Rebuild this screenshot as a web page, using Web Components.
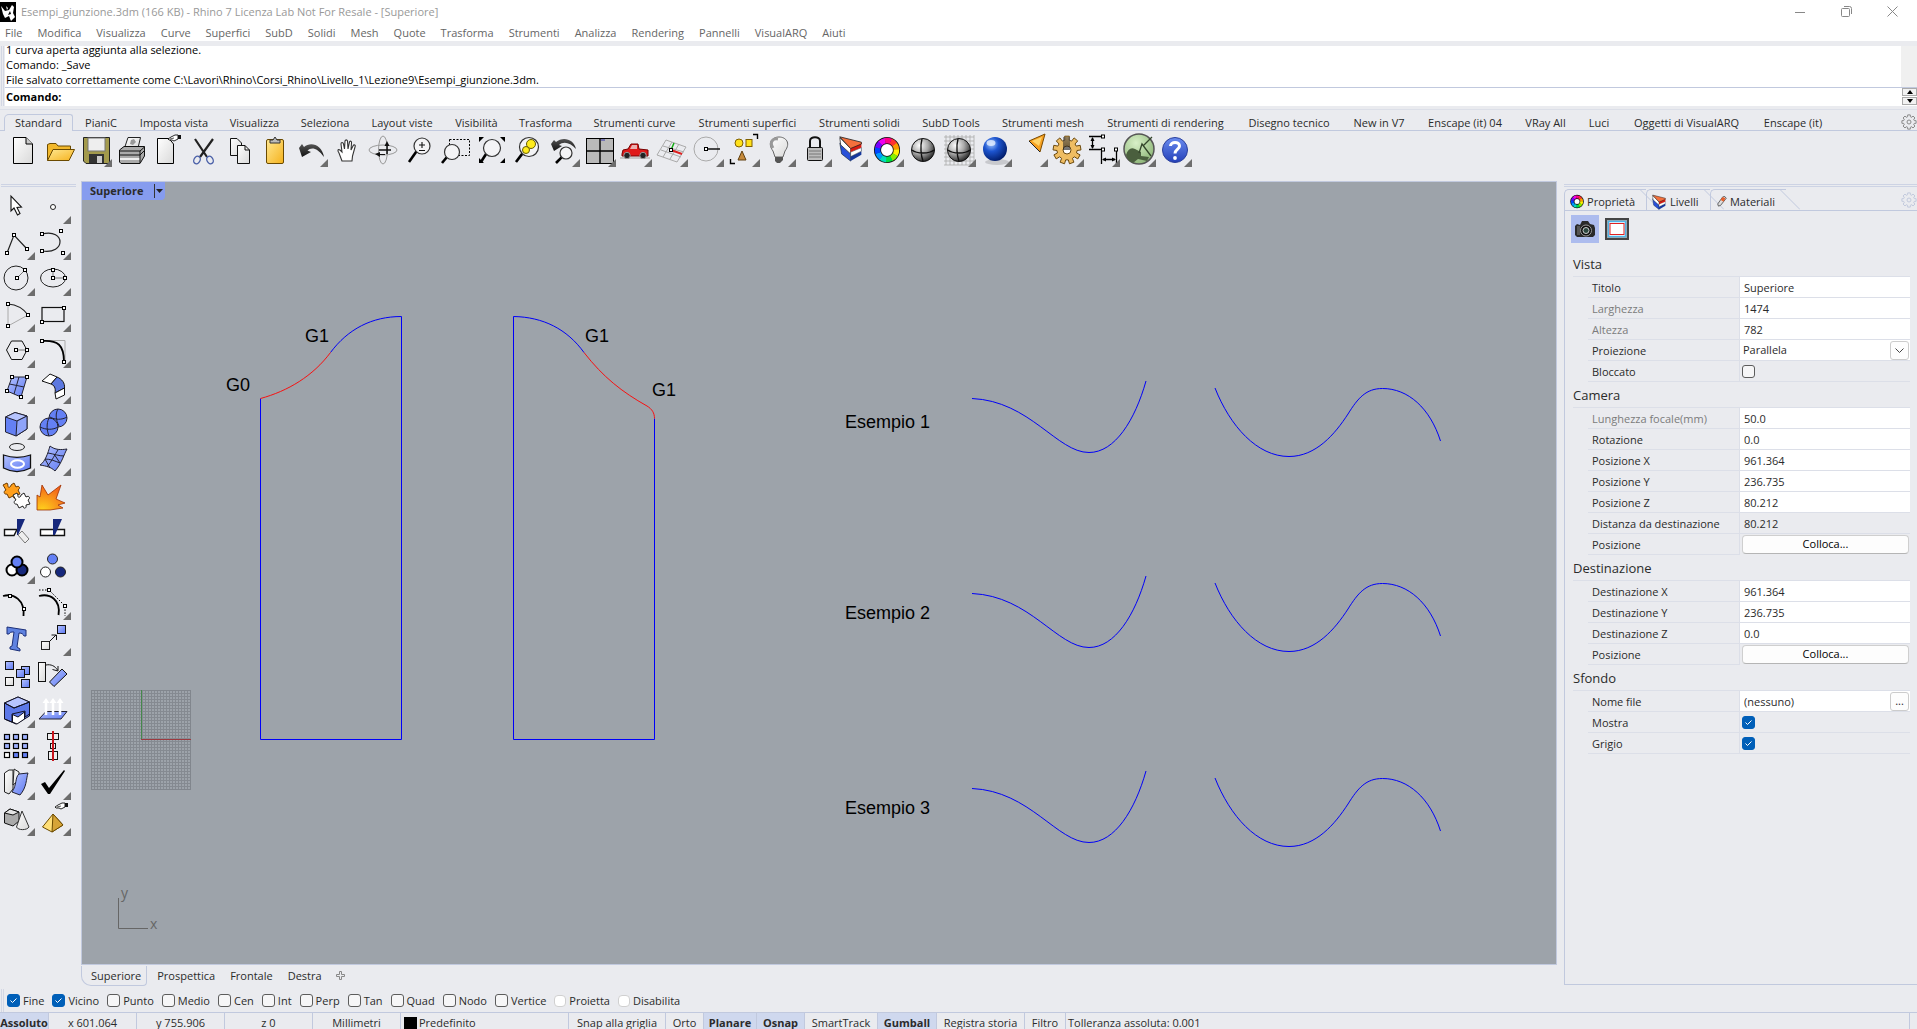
<!DOCTYPE html>
<html lang="it">
<head>
<meta charset="utf-8">
<title>Esempi_giunzione.3dm - Rhino 7</title>
<style>
  html, body { margin: 0; height: 100%; }
  body {
    --line: #c1c9de; --bg: #eaebef; --on: #cfd8ee; --ink: #2b2b2b; --rule: #dcdfe8;
    background: var(--bg); color: var(--ink);
    font: 11px/16px "Open Sans", "Noto Sans", sans-serif; overflow: hidden;
  }
</style>
</head>
<body>
<rhino-app></rhino-app>

<script>
/* ---------- shared drawing parts ---------- */
const DEFS = `<defs>
<linearGradient id="w" x1="0" y1="0" x2="1" y2="1"><stop stop-color="#fff"/><stop offset="1" stop-color="#d9d9d9"/></linearGradient>
<linearGradient id="y" x1="0" y1="0" x2="1" y2="1"><stop stop-color="#ffe892"/><stop offset="1" stop-color="#f5b21d"/></linearGradient>
<linearGradient id="b" x1="0" y1="0" x2="1" y2="1"><stop stop-color="#b5c3ff"/><stop offset="1" stop-color="#5c78f2"/></linearGradient>
<linearGradient id="k" x1="0" y1="0" x2="0" y2="1"><stop stop-color="#555"/><stop offset="1" stop-color="#111"/></linearGradient>
<linearGradient id="q" x1="0" y1="0" x2="0" y2="1"><stop stop-color="#6a8cf0"/><stop offset="1" stop-color="#2440b8"/></linearGradient>
<radialGradient id="g" cx=".35" cy=".3" r=".75"><stop stop-color="#fff"/><stop offset=".5" stop-color="#a8a8a8"/><stop offset="1" stop-color="#222"/></radialGradient>
<radialGradient id="s" cx=".35" cy=".3" r=".75"><stop stop-color="#9cc4ff"/><stop offset=".4" stop-color="#1d55d0"/><stop offset="1" stop-color="#001a66"/></radialGradient>
<radialGradient id="v" cx=".4" cy=".3" r=".8"><stop stop-color="#d8f0c8"/><stop offset="1" stop-color="#86b070"/></radialGradient>
<radialGradient id="o" cx=".2" cy="1" r="1"><stop stop-color="#ffd21c"/><stop offset="1" stop-color="#f4641a"/></radialGradient>
</defs>`;
const dot = (x, y) => `<rect x="${x - 1.5}" y="${y - 1.5}" width="3" height="3" fill="#fff" stroke="#000"/>`;
const dots = (...p) => p.map(([x, y]) => dot(x, y)).join('');
const lens = (x, y, r, hx, hy) => `<path d="M${x - r * .7} ${y + r * .7}L${hx} ${hy}" stroke="#000" stroke-width="2.6"/><circle cx="${x}" cy="${y}" r="${r}" fill="#f4f4f6" stroke="#333" stroke-width="1.2"/>`;
const hand = (x, y) => `<g transform="translate(${x} ${y})"><path d="M0 4L3 2L7 0H10V4L6 6L4 5L1 5Z" fill="#fff" stroke="#111" stroke-width=".9"/><path d="M2 4L6 3" stroke="#111" stroke-width=".7"/><path d="M10 0H13V4H10Z" fill="#111"/></g>`;
const wheel = (x, y, r, w) => {
  const c = ['#f33', '#f90', '#fe0', '#8e0', '#0d4', '#0db', '#09f', '#04f', '#70f', '#e0e', '#f08'];
  const n = c.length;
  const at = (i) => { const a = i / n * 2 * Math.PI - 1.2; return (x + r * Math.cos(a)) + ' ' + (y + r * Math.sin(a)); };
  return `<circle cx="${x}" cy="${y}" r="${r}" fill="#fff" stroke="#111" stroke-width="${w + 1.6}"/>` +
    c.map((k, i) => `<path d="M${at(i)}A${r} ${r} 0 0 1 ${at(i + 1.05)}" fill="none" stroke="${k}" stroke-width="${w}"/>`).join('');
};
const layers = `<path d="M2 9L14 20V29L4 21Z" fill="#2850d8" stroke="#123" stroke-width=".7"/><path d="M14 24L26 18V22L14 29Z" fill="#16389c"/><path d="M2 3L14 15V21L3 11Z" fill="#fff" stroke="#222" stroke-width=".8"/><path d="M14 19L26 14V18L14 24Z" fill="#fff" stroke="#234" stroke-width=".6"/><path d="M14 14L26 9V14L14 19Z" fill="#d81a10"/><path d="M2 2L26 8V10L14 15Z" fill="#f4703c" stroke="#222" stroke-width=".9"/>`;
const gearPath = (x, y, r1, r2, n) => {
  let d = '';
  for (let i = 0; i < n; i++) {
    [[-.32, r1], [-.24, r2], [.24, r2], [.32, r1]].forEach(([o, r], j) => {
      const a = (i + o) / n * 2 * Math.PI - Math.PI / 2;
      d += (i || j ? 'L' : 'M') + (x + r * Math.cos(a)).toFixed(1) + ' ' + (y + r * Math.sin(a)).toFixed(1);
    });
  }
  return d + 'Z';
};
const puzzle = 'M0 3L4 1L5 3C4 6 8 6 8 3L11 1L13 5C16 3 18 6 15 8L17 12L13 13C14 17 10 17 10 14L6 16L4 12C1 13 0 9 3 8Z';
const ball = `<circle cx="18" cy="18" r="11.5" fill="url(#g)" stroke="#111"/><path d="M17 7C15 14 16 24 18 29M7 18C12 22 24 22 29 18" fill="none" stroke="#111" stroke-width="1.4"/>`;

const ICONS = {
  /* top strip */
  nuovo: `<path d="M8.500 5.500H21L27.500 12V31.500H8.500Z" fill="url(#w)" stroke="#000"/><path d="M21 5.500V12H27.500" fill="#ccc" stroke="#000"/>`,
  apri: `<path d="M6.500 28.500V12.500L9 11.500H15L17 14H29.500V18" fill="#f2b82c" stroke="#6b4a00"/><path d="M6.500 28.500L12 17.500H33.500L28 28.500Z" fill="url(#y)" stroke="#6b4a00"/>`,
  salva: `<path d="M6.500 5.500H32.500V31.500H9L6.500 29Z" fill="#a39a4c" stroke="#222"/><rect x="11" y="6" width="17" height="13" fill="#eee" stroke="#777"/><rect x="12" y="22" width="15" height="9" fill="#333"/><rect x="20" y="24" width="5" height="7" fill="#ccc"/>`,
  stampa: `<path d="M11.500 16L15 5.500H27.500L25 16" fill="url(#w)" stroke="#222"/><path d="M18 8L21 7L23 10L20 13L17 12Z" fill="#999"/><path d="M6.500 18L11 14.500H31.500V24L27 31.500H8L6.500 30Z" fill="#aaa" stroke="#111"/><path d="M6.500 19H27L31.500 15M6.500 23H27L32 18" fill="none" stroke="#111"/><path d="M7 27H27" stroke="#eee" stroke-width="2"/><path d="M27 19V31" stroke="#111"/>`,
  proprieta: `<path d="M8.500 6.500H20L24.500 12V31.500H8.500Z" fill="url(#w)" stroke="#000"/>${hand(19, 3)}`,
  taglia: `<path d="M10 7L22 25M28 7L15 25" stroke="#222" stroke-width="2.200"/><ellipse cx="12" cy="28" rx="3" ry="4" transform="rotate(30 12 28)" fill="none" stroke="#4a60a8" stroke-width="1.400"/><ellipse cx="25" cy="28" rx="3" ry="4" transform="rotate(-30 25 28)" fill="none" stroke="#4a60a8" stroke-width="1.400"/>`,
  copia: `<path d="M9.500 6.500H16L20.500 11V23.500H9.500Z" fill="url(#w)" stroke="#111"/><path d="M16.500 13.500H24L28.500 18V31.500H16.500Z" fill="url(#w)" stroke="#111"/><path d="M24 13.500V18H28.500" fill="none" stroke="#111"/>`,
  incolla: `<rect x="9.500" y="7.500" width="17" height="24" rx="1.500" fill="url(#y)" stroke="#6b4a00"/><path d="M13 11V8H16L18 5L20 8H23V11Z" fill="#bbb" stroke="#333"/>`,
  annulla: `<path d="M6 16L9 25L18 20L14.500 18.500C18 15 24 15 31 25C29 13 18 9 11 15L9 12Z" fill="url(#k)"/>`,
  pan: `<path d="M13 29L10 21C8 18 9 17 11 18L13 20L12 12C12 10 14 10 14.500 12L15.500 17L16 9C16.500 7.500 18 7.500 18.500 9L19 17L20.500 10C21 8.500 23 9 22.500 11L22 18L24 14C25 12 27 13 26 15L23.500 24L23 29Z" fill="#fff" stroke="#333" stroke-width="1.100"/>`,
  ruota: `<ellipse cx="18" cy="18" rx="14" ry="5" fill="none" stroke="#999"/><ellipse cx="18" cy="18" rx="4.500" ry="14" fill="none" stroke="#999"/><path d="M22 22V13M26 18H14" stroke="#111" stroke-width="1.500"/><path d="M19.500 14L22 9L24.500 14ZM15 20L10 22L15 25Z" fill="#111"/><path d="M14 22.500H20" stroke="#111"/>`,
  zoom: `${lens(21, 14, 8, 8, 30)}<path d="M18 13H24M21 10V16M18 18.500H24" stroke="#111" stroke-width="1.100"/>`,
  zoomfin: `<rect x="12.500" y="7.500" width="20" height="16" fill="none" stroke="#000" stroke-dasharray="2 1.500"/>${lens(15, 20, 7.500, 5, 31)}`,
  zoomest: `${lens(19, 16, 8.500, 8, 30)}<path d="M6 5H11L6 10ZM32 5H27L32 10ZM6 31H11L6 26ZM32 31H27L32 26Z" fill="#000"/>`,
  zoomsel: `${lens(20, 15, 9.500, 7, 30)}<circle cx="22" cy="12" r="4.500" fill="#ffec1c" stroke="#665c00"/><circle cx="17" cy="18" r="3.500" fill="#ffec1c" stroke="#665c00"/>`,
  annvista: `<path d="M6 12L9 19L17 14L14 13C18 9 25 10 31 17C29 7 18 4 11 10L9 8Z" fill="url(#k)"/>${lens(21, 21, 6, 11, 31)}`,
  vista4: `<rect x="5.500" y="6.500" width="27" height="25" fill="#b9b9b9" stroke="#000"/><path d="M19 6V31M5 19H33" stroke="#000" stroke-width="1.400"/><path d="M20 8H24" stroke="#33a"/>`,
  auto: `<path d="M3 26H33" stroke="#bbb" stroke-width="1.500"/><path d="M5 22L6 18L11 17L14 12H21L22 17L31 18V24H5Z" fill="#e01a1a" stroke="#700"/><path d="M15 13H20V17H13Z" fill="#e8b0b0"/><circle cx="10" cy="23.500" r="3.200" fill="#222" stroke="#999"/><circle cx="26" cy="23.500" r="3.200" fill="#222" stroke="#999"/>`,
  pianoc: `<path d="M4 23L24 30L33 15L13 8ZM8 18L28 25M10 14L31 20M10 25L19 10M17 27L26 12" fill="none" stroke="#aaa"/><path d="M18 18L21 11" stroke="#1a1" stroke-width="1.500"/><path d="M18 18L29 22" stroke="#d22" stroke-width="2"/>${dot(18, 18)}`,
  cerchioc: `<circle cx="17" cy="17" r="12" fill="none" stroke="#aaa"/><path d="M17 17H31" stroke="#000" stroke-width="1.400"/>${dot(17, 17)}`,
  oggetti: `<circle cx="14" cy="11" r="4" fill="#ffe11a" stroke="#806000"/><rect x="21" y="7.500" width="6" height="7" fill="#ffe11a" stroke="#806000"/><path d="M17 19L21 28H13Z" fill="#c58a3c" stroke="#604010"/><path d="M28 2.500H32.500V7M5.500 27V31.500H10" fill="none" stroke="#000" stroke-width="1.400"/>`,
  luce: `<path d="M12 19C6 11 11 5 18 5S30 11 24 19L22 25H14Z" fill="url(#w)" stroke="#666"/><path d="M12 16C8 10 12 6 17 7" fill="none" stroke="#999" stroke-width="3"/><path d="M14 25H22V28L19 31H16L14 29Z" fill="#555"/>`,
  blocca: `<path d="M13 16V9C13 4 23 4 23 9V16" fill="none" stroke="#111" stroke-width="2"/><rect x="10.500" y="15.500" width="15" height="13" rx="1" fill="#bdbdbd" stroke="#111"/><path d="M12 19H24M12 22H24M12 25H24" stroke="#777"/>`,
  livelli: `<g transform="translate(5 3) scale(.9)">${layers}</g>`,
  colori: wheel(18, 18, 9.5, 5.5),
  rendering: ball,
  rendgriglia: `<path d="M3 5H33M3 9H33M3 13H33M3 17H33M3 21H33M3 25H33M3 29H33M3 33H33M5 3V33M9 3V33M13 3V33M17 3V33M21 3V33M25 3V33M29 3V33M33 3V33" stroke="#aaa" stroke-width=".8"/>${ball}`,
  rendpieno: `<ellipse cx="20" cy="30" rx="12" ry="3" fill="#c8c9cd"/><circle cx="18" cy="17" r="12" fill="url(#s)"/><ellipse cx="14" cy="11" rx="4.500" ry="3" fill="#e6f0ff" opacity=".8"/>`,
  faro: `<path d="M16 9L32 2L27 20Z" fill="#f6a020" stroke="#7a4a00"/><path d="M19 9L29 5L26 14Z" fill="#ffd46a"/><path d="M16 9L27 20" stroke="#222"/>`,
  opzioni: `<path d="${gearPath(18, 18, 10, 14, 9)}" fill="#efbd62" stroke="#6b4a10"/><circle cx="18" cy="18" r="4" fill="#fff" stroke="#6b4a10"/><path d="M14 5H21V18H14Z" fill="url(#k)" opacity=".6"/>`,
  quota: `<path d="M4 4.500H18M4 17.500H18M7.500 6V16M16.500 19V32M31.500 19V32M18 27.500H30" stroke="#000" fill="none" stroke-width="1.300"/><path d="M7.500 5L5.500 9H9.500ZM7.500 17L5.500 13H9.500ZM17 27.500L21 25.500V29.500ZM31 27.500L27 25.500V29.500Z"/>${dots([18, 4.5], [18, 17.5], [31, 17.5])}`,
  grasshopper: `<circle cx="18" cy="17" r="15" fill="url(#v)" stroke="#555" stroke-width="1.500"/><path d="M5 23C7 17 10 15 14 17L20 20V24L28 25L26 29L17 27L12 31C9 30 6 27 5 23Z" fill="#4a5f3e"/><path d="M18 21L21 12L30 24M22 14L31 5" stroke="#33452a" fill="none" stroke-width="1.300"/>`,
  aiuto: `<circle cx="18" cy="18" r="12.500" fill="url(#q)" stroke="#2a3f9c"/><path d="M13.500 14C13.500 9.500 22.500 9 22.500 14C22.500 17.500 18 17.500 18 21.500" fill="none" stroke="#fff" stroke-width="3"/><circle cx="18" cy="26" r="1.900" fill="#fff"/>`,

  /* side tools */
  selezione: `<path d="M11 7V22L14 19L17.500 26L20 24.500L17 18.500L21.500 18Z" fill="#fff" stroke="#111" stroke-width="1.100"/>`,
  punto: `<circle cx="17" cy="18" r="2.500" fill="#fff" stroke="#222"/>`,
  polilinea: `<path d="M7 28L14 10L27 24" fill="none" stroke="#222" stroke-width="1.200"/>${dots([7, 28], [14, 10], [27, 24])}`,
  curva: `<path d="M6 9C30 3 30 30 6 26" fill="none" stroke="#222" stroke-width="1.200"/>${dots([6, 9], [25, 6], [6, 26], [27, 28])}`,
  cerchio: `<circle cx="16" cy="17" r="12" fill="none" stroke="#222"/><path d="M17 17L25 9" stroke="#777"/>${dots([17, 17], [25, 9])}`,
  ellisse: `<ellipse cx="17" cy="17" rx="12.500" ry="9" fill="none" stroke="#222"/><path d="M17 9V17H29" stroke="#777" fill="none"/>${dots([17, 9], [17, 17], [29, 17])}`,
  arco: `<path d="M8 7V29L28 18" fill="none" stroke="#aaa"/><path d="M8 7Q21 8 28 18" fill="none" stroke="#222" stroke-width="1.200"/>${dots([8, 7], [28, 18], [8, 29])}`,
  rettangolo: `<rect x="6" y="10.500" width="22" height="14" fill="none" stroke="#111" stroke-width="1.200"/>${dots([28, 11], [6, 25])}`,
  poligono: `<path d="M6.500 17L11.500 8H22L27 17L22 26.500H11.500Z" fill="none" stroke="#111"/><path d="M16 17H27" stroke="#777"/>${dots([16, 17], [27, 17])}`,
  raccorda: `<path d="M6 7.500H29V28" fill="none" stroke="#aaa"/><path d="M6 8C22 7 28 12 28 29" fill="none" stroke="#000" stroke-width="1.800"/>${dots([6, 8], [28, 29])}`,
  superficie: `<path d="M12 8H27L21 28L7 22Z" fill="url(#b)" stroke="#223"/><path d="M19 8L14 25M9.500 15L24 18" stroke="#223"/>${dots([12, 8], [27, 8], [7, 22], [21, 28])}`,
  raccsup: `<path d="M6 12L14 5L21 8L15 15Z" fill="#fff" stroke="#111"/><path d="M15 15L21 8C26 10 29 14 28.500 19L19 24C20 19 18 16 15 15Z" fill="#5c78e0" stroke="#111"/><path d="M19 24L28.500 19V26L20 30Z" fill="#fff" stroke="#111"/>`,
  scatola: `<path d="M5.500 12L15 7.500L27 11V24L16 31L5.500 27Z" fill="#6480f4" stroke="#223"/><path d="M5.500 12L15 7.500L27 11L17 16Z" fill="#b6c4ff" stroke="#223"/><path d="M17 16L27 11V24L16 31Z" fill="#8fa4fa" stroke="#223"/>`,
  sfere: `<circle cx="22" cy="13" r="9" fill="#6480f4" stroke="#223"/><circle cx="13" cy="22" r="9" fill="#6480f4" stroke="#223"/><path d="M13 13C10 19 11 26 13 31M4 22C10 25 17 25 22 22M22 4C19 9 20 15 23 21M14 12C19 15 26 15 31 12" fill="none" stroke="#223"/>`,
  proietta: `<ellipse cx="17" cy="6" rx="7.500" ry="3.500" fill="none" stroke="#222"/><path d="M3.500 14C12 17 22 17 30.500 14V27C22 31.500 12 31.500 3.500 27Z" fill="url(#b)" stroke="#111" stroke-width="1.300"/><ellipse cx="17.500" cy="23" rx="6.500" ry="3.800" fill="none" stroke="#fff" stroke-width="2"/>`,
  maglia: `<path d="M4 24C9 21 12 12 14 5C19 9 25 9 31 8C28 13 26 22 19 30C15 26 10 25 4 24Z" fill="url(#b)" stroke="#223"/><path d="M9 18C14 18 19 20 24 22M12 12C18 13 23 15 28 15M11 26C16 20 19 13 22 9M9 18L14 27M18 13L24 22" stroke="#223" fill="none"/>`,
  unisci: `<g transform="translate(3 5)"><path d="${puzzle}" fill="#ff9f1c" stroke="#6b3a00"/></g><g transform="translate(13 15)"><path d="${puzzle}" fill="#fff" stroke="#222"/></g>`,
  esplodi: `<path d="M1 33V18L4 20L6 8L12 18L25 8L20 22L29 26L22 28L27 31L14 33Z" fill="url(#o)" stroke="#a03000" stroke-width=".8"/>`,
  taglia2: `<path d="M4.500 16.500H17L14 22.500H4.500Z" fill="#fff" stroke="#111" stroke-width="1.400"/><path d="M17 6H25L18 22H17Z" fill="#16287c"/><path d="M18 22L22 18L29 26L25 30Z" fill="#eee" stroke="#777"/>`,
  dividi: `<path d="M4.500 16.500H28.500V22.500H4.500Z" fill="#fff" stroke="#111" stroke-width="1.400"/><path d="M17 6H26L19 22H17Z" fill="#16287c"/>`,
  gruppo: `<g stroke="#000" stroke-width="2"><circle cx="12" cy="21" r="5.500" fill="#fff"/><circle cx="22" cy="21" r="5.500" fill="#16287c"/><circle cx="17" cy="13" r="5.500" fill="#6480f4"/></g>`,
  separa: `<g stroke="#222"><circle cx="16.500" cy="10" r="5" fill="#6480f4"/><circle cx="9.500" cy="23" r="5" fill="#fff"/><circle cx="24.500" cy="23" r="5" fill="#16287c"/></g>`,
  modcurva: `<path d="M3 11C14 8 25 15 23.500 31" fill="none" stroke="#000" stroke-width="1.800"/>${dots([10, 11], [24, 24])}`,
  punticon: `<path d="M3 11C14 8 25 15 22.500 30" fill="none" stroke="#000" stroke-width="1.800"/><path d="M3 5H13L29 21V31" fill="none" stroke="#000" stroke-dasharray="1.500 1.500"/>${dots([13, 5], [29, 21])}`,
  testo: `<path d="M7 6L26 9V15L24 15C23 13 22 12 19 12L17 26L20 28V30L10 28V26L12 25L14 11C11 11 10 11 9 13H7Z" fill="#5f82e0" stroke="#1c2f78"/>`,
  sposta: `<rect x="5.500" y="20.500" width="8" height="8" fill="url(#w)" stroke="#222"/><rect x="21.500" y="4.500" width="8" height="8" fill="url(#b)" stroke="#111"/><path d="M13 21L20 14M15.500 14H20.500V19" stroke="#111" fill="none"/>`,
  copia2: `<g fill="url(#b)" stroke="#111"><rect x="5.500" y="4.500" width="8" height="8"/><rect x="21.500" y="9.500" width="8" height="8"/><rect x="16.500" y="12.500" width="8" height="8"/><rect x="21.500" y="22.500" width="8" height="8"/></g><rect x="5.500" y="20.500" width="8" height="8" fill="url(#w)" stroke="#111"/>`,
  ruota2: `<rect x="2.500" y="5.500" width="7" height="19" fill="url(#w)" stroke="#111"/><path d="M10 8C15 7 19 9 21.500 13M16.500 12.500L22 14V9" fill="none" stroke="#111"/><path d="M13.500 25L26 12L31 17L18 29.500Z" fill="url(#b)" stroke="#111"/>`,
  booleana: `<path d="M4.500 10L18 4L29.500 9V23L16 31L4.500 26Z" fill="#5c78e8" stroke="#112"/><path d="M4.500 10L18 4L29.500 9L14 15Z" fill="#b6c4ff" stroke="#112"/><path d="M14 15L29.500 9V21L25 24V18L12 21V29L4.500 26V10Z" fill="none" stroke="#112"/><path d="M12.500 21.500L18 24L24.500 19V26L17 31L12.500 29Z" fill="#fff" stroke="#112"/>`,
  estrudi: `<path d="M3 26L10 18.500H31L25 26Z" fill="url(#b)" stroke="#223"/><path d="M10 22V8M17 22V8M24 22V8" stroke="#fff" stroke-width="2.500"/><path d="M6.500 10L10 5L13.500 10ZM13.500 10L17 5L20.500 10ZM20.500 10L24 5L27.500 10Z" fill="#fff"/>`,
  serie: [[4, 6], [13, 6], [22, 6], [4, 15], [13, 15], [22, 15], [4, 24], [13, 24], [22, 24]].map(([x, y], i) => `<rect x="${x + .5}" y="${y - .5}" width="5" height="5" fill="${i === 6 ? '#fff' : i < 6 ? '#9fb2ff' : '#6480f4'}" stroke="#000" stroke-width="1.200"/>`).join(''),
  allinea: `<g fill="#eee" stroke="#111"><rect x="11.500" y="4.500" width="11" height="6"/><rect x="14.500" y="14.500" width="5" height="5"/><rect x="12.500" y="22.500" width="9" height="8"/></g><path d="M17 2V32" stroke="#c8141c" stroke-width="2"/>`,
  deforma: `<path d="M4.500 8L9 5H13V24L9 29L4.500 27Z" fill="url(#w)" stroke="#222"/><path d="M14 4L19 7V15L13 20Z" fill="#eee" stroke="#222"/><path d="M12 27C17 20 15 12 19 9L28 8C26 14 27 22 20 30Z" fill="url(#b)" stroke="#223"/>`,
  controlla: `<path d="M5 19L9 17L13 23L28 5L29 6L14 29H12Z" fill="#000"/>`,
  solidi: `<path d="M4.500 12L10 8L19 11V20L13 25L4.500 22Z" fill="#aaa" stroke="#111"/><path d="M4.500 12L10 8L19 11L13 14Z" fill="#e4e4e4" stroke="#111"/><path d="M22 10L29 26C27 29.500 18 29.500 16.500 26Z" fill="url(#w)" stroke="#333"/>`,
  piramide: `<path d="M17 13L27 24L16 31L6.500 26Z" fill="#ffdf77" stroke="#6b4a00"/><path d="M17 13L27 24L16 31Z" fill="#d6a437" stroke="#6b4a00"/>${hand(19, 2)}`
};

/* ---------- base ---------- */
class Part extends HTMLElement {
  connectedCallback() {
    if (this.shadowRoot) return;
    this.attachShadow({ mode: 'open' }).innerHTML = `<style>
      *{box-sizing:border-box} :host{display:block}
      button,input,select{font:inherit;color:inherit;margin:0}
      button{border:0;background:none;padding:0;text-align:center;white-space:nowrap}
      a{color:inherit;text-decoration:none;white-space:nowrap} svg{display:block}
      ${this.css || ''}</style>${this.html()}`;
  }
}
const define = (name, css, html) => customElements.define(name, class extends Part {
  get css() { return css; }
  html() { return html(this); }
});

const GEAR = (c) => `<svg width="16" height="16" viewBox="0 0 16 16" fill="none" stroke="${c}"><path d="${gearPath(8, 8, 5.5, 7.2, 8)}"/><circle cx="8" cy="8" r="2"/></svg>`;
const CHECK_CSS = `
  input[type=checkbox]{appearance:none;width:13px;height:13px;flex:none;border:1px solid #5c5c5c;border-radius:3px;background:#f6f6f7}
  input[type=checkbox]:checked{border-color:#005fb8;background:#005fb8}
  .box{display:grid;flex:none} .box>*{grid-area:1/1} .box svg{pointer-events:none}`;
const check = (id, on) => `<span class="box"><input type="checkbox" id="${id}" ${on ? 'checked' : ''}>${on ? '<svg width="13" height="13" fill="none" stroke="#fff"><path d="M3.500 6.500L5.500 8.500L9.500 4.500"/></svg>' : ''}</span>`;

define('tool-icon', `:host{width:36px;height:36px;flex:none} button{display:block}`,
  (el) => `<button aria-label="${el.getAttribute('name')}"><svg width="36" height="36" viewBox="0 0 36 36">${DEFS}${ICONS[el.getAttribute('name')]}${el.hasAttribute('menu') ? '<path d="M35 27V35H27Z" fill="#6d6d6d"/>' : ''}</svg></button>`);

/* ---------- header ---------- */
define('title-bar', `:host{display:flex;height:23px;align-items:center;background:#fff;color:#999;padding-right:2px}
  span{flex:1;padding-left:5px} button{width:46px;height:22px;display:grid;place-items:center}`,
  () => `<svg width="16" height="20" viewBox="0 0 16 20"><path d="M0 0H16V20H0Z" fill="#000"/><path d="M1 4L5 9L9 8L12 3L14 5L13 11L15 15L11 19L9 14L5 16L3 12Z" fill="#fff"/><path d="M6 4L8 6L7 8Z" fill="#fff"/><path d="M10 9L8 13L11 12Z" fill="#000"/></svg>
  <span>Esempi_giunzione.3dm (166 KB) - Rhino 7 Licenza Lab Not For Resale - [Superiore]</span>
  <button aria-label="Riduci a icona"><svg width="10" height="10" stroke="#888"><path d="M0 5.500H10"/></svg></button>
  <button aria-label="Ripristina"><svg width="11" height="11" fill="none" stroke="#888"><rect x=".5" y="2.500" width="8" height="8" rx="1"/><path d="M3 .500H8.500Q10.500 .500 10.500 2.500V8"/></svg></button>
  <button aria-label="Chiudi"><svg width="11" height="11" stroke="#888"><path d="M.5 .500L10.500 10.500M10.500 .500L.5 10.500"/></svg></button>`);

define('menu-bar', `nav{display:flex;gap:15px;height:18px;padding:2px 0 0 5px;align-items:center;background:#fff;color:#666}`,
  () => `<nav>${'File,Modifica,Visualizza,Curve,Superfici,SubD,Solidi,Mesh,Quote,Trasforma,Strumenti,Analizza,Rendering,Pannelli,VisualARQ,Aiuti'.split(',').map((t) => `<a href="#">${t}</a>`).join('')}</nav>`);

define('command-area', `
  :host{margin-top:5px;height:64px;border-bottom:1px solid var(--rule);padding:0 0 3px 1px;display:flex;gap:1px}
  .grip{width:3px;border:1px solid #d3d7e4;border-width:0 1px}
  .area{flex:1;display:flex;flex-direction:column;background:#fff;color:#000}
  .log{height:41px;display:flex;flex-direction:column;justify-content:flex-end;overflow:hidden;padding-left:1px;border-right:16px solid #f0f0f0;line-height:15px}
  .log p{margin:0}
  .prompt{flex:1;display:flex;align-items:center;border-top:1px solid var(--line);padding:0 0 1px 1px;font-weight:bold}
  input{flex:1;border:0;background:none;outline:0;height:16px}
  .spin{display:grid;width:15px;height:17px;gap:1px} .spin button{border:1px solid #aaa;background:#f2f2f2;display:grid;place-items:center}`,
  () => `<div class="grip"></div><div class="area"><div class="log"><p>1 curva aperta aggiunta alla selezione.</p><p>Comando: _Save</p><p>File salvato correttamente come C:\\Lavori\\Rhino\\Corsi_Rhino\\Livello_1\\Lezione9\\Esempi_giunzione.3dm.</p></div>
  <div class="prompt"><label for="cmd">Comando:</label><input id="cmd"><div class="spin"><button aria-label="Su"><svg width="6" height="4"><path d="M3 0L6 4H0Z"/></svg></button><button aria-label="Giu"><svg width="6" height="4"><path d="M3 4L6 0H0Z"/></svg></button></div></div></div>`);

const TABS = [['Standard', 69], ['PianiC', 56], ['Imposta vista', 90], ['Visualizza', 71], ['Seleziona', 70], ['Layout viste', 84], ['Visibilità', 65], ['Trasforma', 73], ['Strumenti curve', 105], ['Strumenti superfici', 121], ['Strumenti solidi', 103], ['SubD Tools', 80], ['Strumenti mesh', 104], ['Strumenti di rendering', 141], ['Disegno tecnico', 106], ['New in V7', 74], ['Enscape (it) 04', 98], ['VRay All', 63], ['Luci', 44], ['Oggetti di VisualARQ', 131], ['Enscape (it)', 82]];
define('toolbar-tabs', `
  :host{display:flex;height:21px;padding:4px 0 0 4px;border-bottom:1px solid var(--line)}
  nav{display:grid;flex:1;grid-template-columns:${TABS.map((t) => t[1] + 'px').join(' ')}} a{padding-top:1px;height:17px;text-align:center}
  .on{background:var(--bg);border:1px solid var(--line);border-bottom:0;border-radius:5px 3px 0 0;padding-top:0}`,
  () => `<nav>${TABS.map(([t], i) => `<a href="#" class="${i ? '' : 'on'}">${t}</a>`).join('')}</nav><button aria-label="Opzioni barra">${GEAR('#8a8a8a')}</button>`);

define('tool-strip', `:host{display:flex;height:50px;padding:1px 0 0 5px}`,
  () => 'nuovo,apri,salva+,stampa,proprieta,taglia,copia,incolla,annulla+,pan,ruota,zoom,zoomfin,zoomest,zoomsel,annvista+,vista4+,auto+,pianoc+,cerchioc+,oggetti+,luce+,blocca+,livelli+,colori+,rendering,rendgriglia+,rendpieno+,faro+,opzioni+,quota+,grasshopper+,aiuto+'
    .split(',').map((n) => `<tool-icon name="${n.replace('+', '')}" ${n.endsWith('+') ? 'menu' : ''}></tool-icon>`).join(''));

define('side-tools', `
  :host{padding-top:3px} .grip{height:3px;width:75px;border:1px solid #cdd3e4;border-width:1px 0;margin-left:1px}
  .tools{display:grid;grid-template-columns:36px 36px;padding-top:2px}`,
  () => `<div class="grip"></div><div class="tools">${'selezione,punto+,polilinea+,curva+,cerchio+,ellisse+,arco+,rettangolo+,poligono+,raccorda+,superficie+,raccsup+,scatola+,sfere+,proietta+,maglia+,unisci,esplodi,taglia2,dividi,gruppo+,separa,modcurva,punticon+,testo,sposta+,copia2,ruota2,booleana+,estrudi+,serie+,allinea+,deforma+,controlla+,solidi+,piramide+'
    .split(',').map((n) => `<tool-icon name="${n.replace('+', '')}" ${n.endsWith('+') ? 'menu' : ''}></tool-icon>`).join('')}</div>`);

/* ---------- viewport ---------- */
const pair = (y) => `<g transform="translate(0 ${y})"><path d="M972 398.500C1030 401 1057 452.500 1089 452.500C1115 452.500 1135 420 1146 381"/><path d="M1215 388C1230 426 1257 456.500 1289 456.500C1316 456.500 1335 434 1348 414C1358 398 1366 388.500 1382.500 388.500C1408 388.500 1430 408 1440.500 441"/></g>`;
define('model-viewport', `
  :host{position:relative;overflow:hidden;background:#9da3aa;border:1px solid var(--line)}
  .canvas{position:absolute;inset:0;width:100%;height:100%}
  .name{position:absolute;left:0;top:0;display:flex;align-items:center;gap:11px;height:18px;padding:0 2px 0 8px;background:#869cef;border-radius:0 0 4px 0;font-weight:bold}
  .name i{width:9px;height:14px;border-left:1px solid #333;display:grid;place-items:center}`,
  () => `<svg class="canvas" aria-label="Disegno"><defs><pattern id="grid" width="3" height="3" patternUnits="userSpaceOnUse"><path d="M0 .500H3M.5 0V3" stroke="#858a91"/></pattern></defs>
  <g transform="translate(-82 -182)">
    <g transform="translate(91 690)"><rect width="100" height="100" fill="url(#grid)"/><rect x=".5" y=".500" width="99" height="99" fill="none" stroke="#81868d"/><path d="M50.500 0V50" stroke="#46884c"/><path d="M50 49.500H100" stroke="#9c3a40"/></g>
    <g fill="none" stroke="#0000f8">
      <path d="M260.500 398.500V739.500H401.500V316.500C372 316.500 348 329 330.500 352.500"/>
      <path d="M584 352.500C567 329 543 317 513.500 316.500V739.500H654.500V418.500"/>
      ${pair(0)}${pair(195)}${pair(390)}
      <path stroke="#f81010" d="M330.500 352.500C313 376 288 391 260.500 398.500M584 352.500C603 377 622 392 647 406C652 409 654.500 413 654.500 418.500"/>
    </g>
    <path d="M118.500 898V928.500H148" fill="none" stroke="#666"/>
    <g fill="#000" font-family="Liberation Sans, Arial, sans-serif" font-size="18">
      <text x="226" y="391">G0</text><text x="305" y="342">G1</text><text x="585" y="342">G1</text><text x="652" y="396">G1</text>
      <text x="845" y="428">Esempio 1</text><text x="845" y="619">Esempio 2</text><text x="845" y="814">Esempio 3</text>
    </g>
    <g fill="#666" font-size="14"><text x="121" y="898">y</text><text x="150" y="929">x</text></g>
  </g></svg>
  <button class="name">Superiore<i><svg width="7" height="4"><path d="M0 0H7L3.500 4Z" fill="#222"/></svg></i></button>`);

define('view-tabs', `nav{display:flex;height:21px;align-items:center} a{padding:0 8px 0 7px} a:first-child{padding:0 5px 0 9px;margin-right:3px;height:20px;line-height:20px;border:1px solid var(--line);border-top:0;border-radius:0 0 4px 10px} button{padding-left:6px}`,
  () => `<nav>${'Superiore,Prospettica,Frontale,Destra'.split(',').map((t) => `<a href="#">${t}</a>`).join('')}<button aria-label="Nuova vista"><svg width="9" height="9" fill="none" stroke="#888"><path d="M3.500 .500H5.500V3.500H8.500V5.500H5.500V8.500H3.500V5.500H.5V3.500H3.500Z"/></svg></button></nav>`);

/* ---------- properties panel ---------- */
define('props-row', `
  :host{display:flex;height:21px;margin-left:15px}
  label{width:152px;padding-left:4px;border:1px solid var(--rule);border-width:0 1px 1px 0;line-height:21px}
  .value{flex:1;display:flex;align-items:center;min-width:0;height:21px;padding-left:2px;border-bottom:1px solid var(--rule)}
  .white{background:#fff} input:not([type]),select{flex:1;width:0;border:0;background:none;padding:0 0 0 2px;outline:0;height:20px}
  select{appearance:none;padding-left:1px}
  :host([dim]) label{color:#7b7b7b}
  .wide{flex:1;height:19px;margin-right:1px;border:1px solid #cfcfcf;border-bottom-color:#b5b5b5;border-radius:4px;background:#fdfdfd;color:#000}
  .combo{display:flex;flex:1;align-items:center} .combo svg{pointer-events:none}
  .mini{width:19px;height:19px;margin-right:1px;border:1px solid #ccc;border-radius:3px;background:#fdfdfd;display:grid;place-items:center}
  .flat{border-bottom-color:transparent} ${CHECK_CSS}`,
  (el) => {
    const k = el.getAttribute('kind') || 'text', v = el.getAttribute('value') || '', l = el.getAttribute('label');
    const body = {
      text: `<input id="f" value="${v}">`,
      plain: `<input id="f" value="${v}" readonly>`,
      file: `<input id="f" value="${v}"><button class="mini" aria-label="Sfoglia">...</button>`,
      combo: `<span class="combo"><select id="f"><option>${v}</option></select><span class="mini"><svg width="9" height="5" fill="none" stroke="#444"><path d="M.5 .500L4.500 4.500L8.500 .500"/></svg></span></span>`,
      button: `<button id="f" class="wide">${v}</button>`,
      check: check('f', v)
    }[k];
    return `<label for="f">${l}</label><div class="value ${['text', 'file', 'combo'].includes(k) ? 'white' : ''} ${k === 'button' ? 'flat' : ''}">${body}</div>`;
  });

define('props-section', `h2{margin:0;height:26px;border-bottom:1px solid var(--rule);font-size:13px;line-height:27px;font-weight:normal}`,
  (el) => `<h2>${el.getAttribute('title')}</h2><slot></slot>`);

define('props-panel', `
  :host{padding:3px 0 0 7px;display:flex;flex-direction:column}
  .grip{height:3px;border:1px solid #cdd3e4;border-width:1px 0;margin-bottom:2px}
  .tabs{display:flex;height:22px;border-bottom:1px solid var(--line)}
  .tab{display:flex;align-items:center;padding:3px 0 0 5px;border:1px solid var(--line);border-width:1px 0 0 1px;border-radius:5px 0 0 0;height:21px;gap:3px;text-align:left}
  .tab:nth-child(1){width:82px} .tab:nth-child(2){width:64px;padding-left:4px} .tab:nth-child(3){width:76px;padding-left:6px}
  .tab span{flex:1} .tab>.slant{flex:none;margin:-4px -14px 0 0}
  .tabs button:last-child{margin-left:auto}
  .body{flex:1;border:1px solid var(--line);border-width:0 0 1px 1px;padding:4px 7px 0 8px;margin-bottom:4px}
  .modes{display:flex;gap:4px;align-items:center;padding-bottom:8px;margin-left:-2px} .modes button{width:28px;height:28px;display:grid;place-items:center} .modes .on{background:#adbcee}`,
  () => {
    const slant = '<svg class="slant" width="22" height="21" fill="none" stroke="#c1c9de"><path d="M0 .500H2L22 20.500"/></svg>';
    const rows = (s) => s.map(([l, v, k, d]) => `<props-row label="${l}" value="${v}" kind="${k || 'text'}" ${d ? 'dim' : ''}></props-row>`).join('');
    return `<div class="grip"></div><div class="tabs">
    <button class="tab"><svg width="15" height="15" viewBox="0 0 15 15">${wheel(7.5, 7.5, 5, 3)}</svg><span>Proprietà</span>${slant}</button>
    <button class="tab"><svg width="16" height="16" viewBox="0 0 28 30">${layers}</svg><span>Livelli</span>${slant}</button>
    <button class="tab"><svg width="14" height="15" viewBox="0 0 14 15"><path d="M1 11L8 1L11 .500L13 3L5 13L2 14Z" fill="#ddd" stroke="#333"/><path d="M5 5L8 1L12 3L9 8Z" fill="#e8602c"/></svg><span>Materiali</span>${slant}</button>
    <button aria-label="Opzioni pannello">${GEAR('#c3cadd')}</button></div>
    <div class="body"><div class="modes">
      <button class="on" aria-label="Camera"><svg width="22" height="18" viewBox="0 0 22 18"><path d="M1 6L3 4L6 5L8 1H14L16 4L20 5L21 8V15L19 17H3L1 15Z" fill="#2a2a2a"/><path d="M3 6H6V15H3Z" fill="#555"/><circle cx="12" cy="10.500" r="5.500" fill="#111" stroke="#999"/><circle cx="12" cy="10.500" r="3" fill="#2c4840" stroke="#ccc"/></svg></button>
      <button aria-label="Vista"><svg width="24" height="22"><rect x="1" y="1" width="22" height="20" fill="#a3a8aa" stroke="#444" stroke-width="2"/><rect x="3.500" y="3.500" width="17" height="15" fill="#fff" stroke="#4fb4e8" stroke-width="1.500"/><rect x="5" y="5.500" width="14" height="11" fill="#fff" stroke="#e02020"/></svg></button></div>
    <props-section title="Vista">${rows([['Titolo', 'Superiore'], ['Larghezza', '1474', '', 1], ['Altezza', '782', '', 1], ['Proiezione', 'Parallela', 'combo'], ['Bloccato', '', 'check']])}</props-section>
    <props-section title="Camera">${rows([['Lunghezza focale(mm)', '50.0', '', 1], ['Rotazione', '0.0'], ['Posizione X', '961.364'], ['Posizione Y', '236.735'], ['Posizione Z', '80.212'], ['Distanza da destinazione', '80.212', 'plain'], ['Posizione', 'Colloca...', 'button']])}</props-section>
    <props-section title="Destinazione">${rows([['Destinazione X', '961.364'], ['Destinazione Y', '236.735'], ['Destinazione Z', '0.0'], ['Posizione', 'Colloca...', 'button']])}</props-section>
    <props-section title="Sfondo">${rows([['Nome file', '(nessuno)', 'file'], ['Mostra', '1', 'check'], ['Grigio', '1', 'check']])}</props-section></div>`;
  });

/* ---------- footer ---------- */
define('osnap-bar', `
  :host{display:flex;height:23px;align-items:center;gap:8px;padding-left:1px}
  .grip{width:3px;height:100%;border:1px solid #d3d7e4;border-width:0 1px;margin-right:-5px}
  .item{display:flex;align-items:center;gap:3px} ${CHECK_CSS}
  .soft input[type=checkbox]{width:12px;height:12px;border-color:#d0d0d0;background:#fff;border-radius:4px}`,
  () => `<div class="grip"></div>` + 'Fine,Vicino,Punto,Medio,Cen,Int,Perp,Tan,Quad,Nodo,Vertice,Proietta,Disabilita'.split(',').map((t, i) => `<span class="item ${i > 10 ? 'soft' : ''}">${check('o' + i, i < 2)}<label for="o${i}">${t}</label></span>`).join(''));

define('status-bar', `
  :host{height:17px;border-top:1px solid var(--line);overflow:hidden}
  .row{display:flex;height:20px;margin-right:7px;border-right:1px solid var(--line)}
  button{height:20px;border-right:1px solid var(--line);flex:none;overflow:hidden}
  .on{background:var(--on);font-weight:bold} .layer{display:flex;align-items:center;gap:2px;padding-left:3px}
  .layer i{width:13px;height:13px;background:#000} .last{padding-left:2px;line-height:20px}`,
  () => {
    const cells = (s) => s.map(([t, w, o]) => `<button class="${o ? 'on' : ''}" style="width:${w}px">${t}</button>`).join('');
    return `<div class="row">${cells([['Assoluto', 49, 1], ['x 601.064', 88], ['y 755.906', 88], ['z 0', 88], ['Millimetri', 88]])}<button class="layer" style="width:168px"><i></i>Predefinito</button>${cells([['Snap alla griglia', 97], ['Orto', 38], ['Planare', 53, 1], ['Osnap', 48, 1], ['SmartTrack', 73], ['Gumball', 59, 1], ['Registra storia', 88], ['Filtro', 41]])}<span class="last">Tolleranza assoluta: 0.001</span></div>`;
  });

/* ---------- application ---------- */
define('rhino-app', `
  :host{display:flex;flex-direction:column;height:100vh}
  main{flex:1;min-height:0;display:grid;grid-template-columns:81px minmax(0,1fr) 360px}
  .centre{display:flex;flex-direction:column;min-height:0;padding-bottom:3px} model-viewport{flex:1}`,
  () => `<title-bar></title-bar><menu-bar></menu-bar><command-area></command-area><toolbar-tabs></toolbar-tabs><tool-strip></tool-strip>
  <main><side-tools></side-tools><div class="centre"><model-viewport></model-viewport><view-tabs></view-tabs></div><props-panel></props-panel></main>
  <osnap-bar></osnap-bar><status-bar></status-bar>`);
</script>
</body>
</html>
